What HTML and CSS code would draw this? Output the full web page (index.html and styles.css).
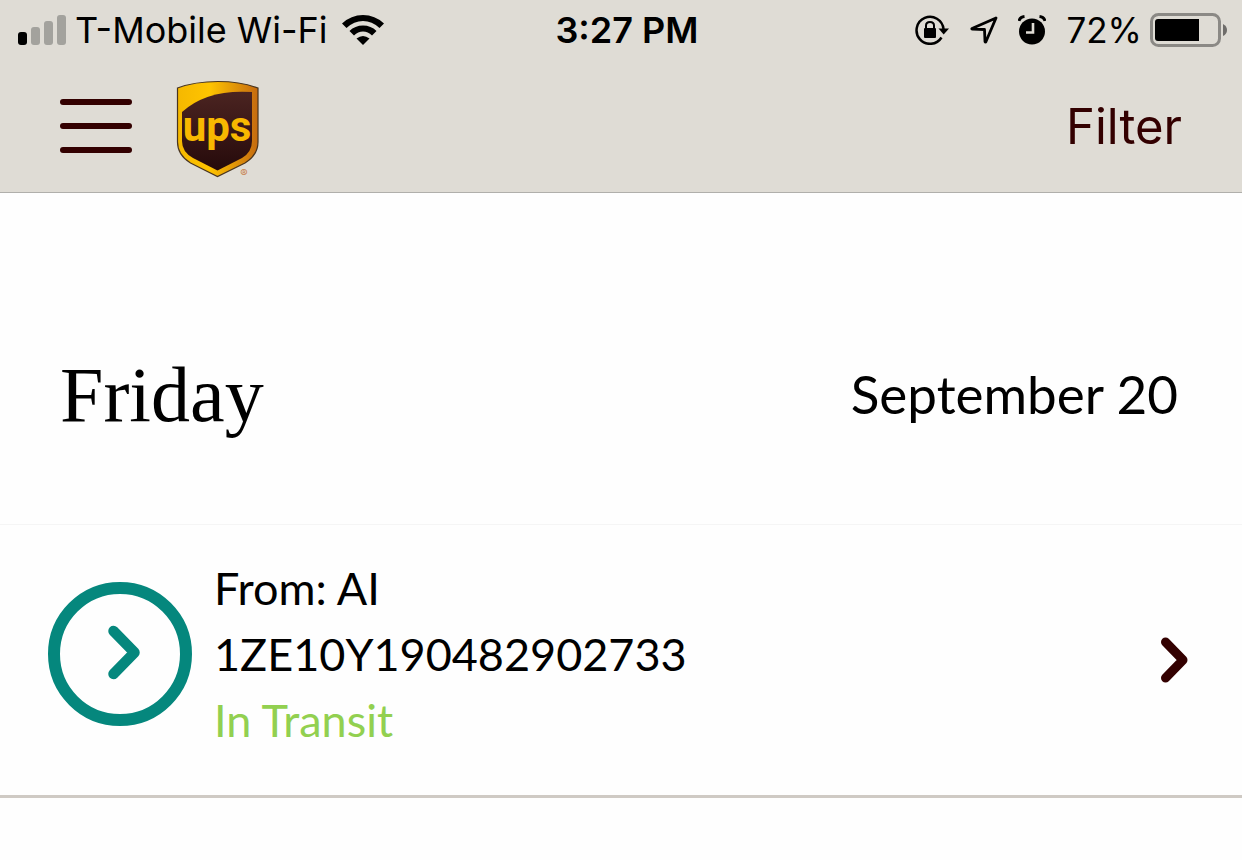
FILE: index.html
```html
<!DOCTYPE html>
<html lang="en">
<head>
  <meta charset="UTF-8">
  <meta name="viewport" content="width=device-width, initial-scale=1">
  <title>UPS</title>
  <link rel="stylesheet" href="styles.css">
</head>
<body>
  <header class="top">
    <div class="status">
      <div class="status-left">
        <svg class="signal" width="48" height="30" viewBox="0 0 48 30">
          <rect x="0" y="17" width="9" height="13" rx="3" fill="#000"/>
          <rect x="13" y="12" width="9" height="18" rx="3" fill="#a3a29d"/>
          <rect x="26" y="6" width="9" height="24" rx="3" fill="#a3a29d"/>
          <rect x="39" y="0" width="9" height="30" rx="3" fill="#a3a29d"/>
        </svg>
        <span class="carrier">T-Mobile Wi-Fi</span>
        <svg width="42" height="30" viewBox="0 0 42 30">
          <path d="M0 8.500Q9 0 21 0T42 8.500L37.500 13Q30 6 21 6T4.500 13Z"/>
          <path d="M7.500 16Q13 10.500 21 10.500T34.500 16L30 20.500Q26 16.500 21 16.500T12 20.500Z"/>
          <path d="M14.500 23.500Q21 18.500 27.500 23.500L21 30Z"/>
        </svg>
      </div>
      <div class="clock">3:27 PM</div>
      <div class="status-right">
        <svg width="35" height="30" viewBox="0 0 35 30">
          <path d="M26.500 22.500A13.500 13.500 0 1 1 28.500 14" fill="none" stroke="#000" stroke-width="2.500"/>
          <path d="M23.500 13.500H34L28.700 19.500Z"/>
          <rect x="9" y="13" width="12" height="10" rx="1"/>
          <path d="M11 14V10.500Q11 7 15 7T19 10.500V14" fill="none" stroke="#000" stroke-width="2"/>
        </svg>
        <svg width="28" height="28" viewBox="0 0 28 28">
          <path d="M26 2L2 12.500Q1.500 13 2.500 13.200L14.500 13.500L15 25.500Q15.500 26.500 16 25.500Z" fill="none" stroke="#000" stroke-width="2.800" stroke-linejoin="round"/>
        </svg>
        <svg width="28" height="30" viewBox="0 0 28 30">
          <circle cx="14" cy="16.500" r="13"/>
          <path d="M1 6Q2 2 6.500 1.500M27 6Q26 2 21.500 1.500" fill="none" stroke="#000" stroke-width="3"/>
          <path d="M15 8V17.500H8" fill="none" stroke="#dfdcd5" stroke-width="2.600"/>
        </svg>
        <span>72%</span>
        <svg class="battery" width="78" height="34" viewBox="0 0 78 34">
          <rect x="1.500" y="1.500" width="68" height="31" rx="7" fill="none" stroke="#8b8985" stroke-width="3"/>
          <path d="M8 6H49V28H8Q5 28 5 25V9Q5 6 8 6Z"/>
          <path d="M73 11Q77 13 77 17T73 23Z" fill="#6f6d6a"/>
        </svg>
      </div>
    </div>
    <nav class="nav">
      <button class="menu" type="button" aria-label="Menu">
        <span></span><span></span><span></span>
      </button>
      <svg class="logo" width="84" height="112" viewBox="0 -10 84 112" role="img" aria-label="UPS">
        <defs>
          <linearGradient id="gold" x1="0" y1="0" x2="1" y2="0">
            <stop offset="0" stop-color="#f5b800"/>
            <stop offset=".4" stop-color="#ffc400"/>
            <stop offset="1" stop-color="#c56a10"/>
          </linearGradient>
          <linearGradient id="brown" x1="0" y1="0" x2="0" y2="1">
            <stop offset="0" stop-color="#4b2421"/>
            <stop offset="1" stop-color="#260a0b"/>
          </linearGradient>
        </defs>
        <path d="M1.500 8Q19 1.500 42 1.500T82 8V62Q82 75 69 83L41.500 96.500L14.500 83Q1.500 75 1.500 62Z" fill="url(#gold)" stroke="#493520" stroke-width="1.200"/>
        <path d="M6 32Q31 9 76 12V61Q76 72 66 78L41.500 90.500L17 78Q6 72 6 61Z" fill="url(#brown)"/>
        <text class="logo-text" x="41" y="61" text-anchor="middle">ups</text>
        <text class="logo-mark" x="68" y="97" text-anchor="middle">®</text>
      </svg>
      <button class="filter" type="button">Filter</button>
    </nav>
  </header>

  <main>
    <section class="day">
      <h1>Friday</h1>
      <span class="date">September 20</span>
    </section>

    <a class="package" href="#">
      <svg width="144" height="144" viewBox="0 0 144 144">
        <circle cx="72" cy="72" r="66" fill="none" stroke="#05877d" stroke-width="12"/>
        <path d="M65.500 49L86.500 70.500L65.500 92" fill="none" stroke="#05877d" stroke-width="10.500" stroke-linecap="round" stroke-linejoin="round"/>
      </svg>
      <div class="details">
        <div>From: AI</div>
        <div>1ZE10Y190482902733</div>
        <div class="transit">In Transit</div>
      </div>
      <svg width="28" height="58" viewBox="0 0 28 58">
        <path d="M5.500 17L23 35L5.500 53" fill="none" stroke="#330000" stroke-width="9" stroke-linecap="round" stroke-linejoin="round"/>
      </svg>
    </a>
  </main>
</body>
</html>
```
FILE: styles.css
```css
body {
  margin: 0;
  background: #fefefe;
  color: #000;
  font-family: Lato, "Open Sans", sans-serif;
}
svg {
  display: block;
  flex-shrink: 0;
}
button {
  padding: 0;
  border: 0;
  background: none;
  color: #330000;
}
.top {
  background: #dfdcd5;
  border-bottom: 1px solid #b0afab;
  font-family: Inter, sans-serif;
}
.status {
  display: grid;
  grid-template-columns: 1fr auto 1fr;
  align-items: center;
  height: 60px;
  padding: 0 14px 0 18px;
  font-size: 36px;
  line-height: 60px;
}
.status-left,
.status-right {
  display: flex;
  align-items: center;
}
.status-left {
  gap: 14px;
}
.carrier {
  margin-left: -5px;
}
.clock {
  padding-left: 8px;
  font-weight: 600;
}
.status-right {
  justify-content: flex-end;
  gap: 20px;
  font-size: 35px;
}
.battery {
  margin-left: -12px;
}
.nav {
  display: flex;
  align-items: center;
  gap: 44px;
  height: 132px;
  padding: 0 60px;
}
.menu {
  display: flex;
  flex-direction: column;
  gap: 18px;
  width: 72px;
}
.menu span {
  height: 6px;
  border-radius: 3px;
  background: #330000;
}
.logo-text {
  font: bold 42px Roboto, sans-serif;
  fill: #f8b800;
}
.logo-mark {
  font-size: 11px;
  fill: #c8824e;
}
.filter {
  margin-left: auto;
  font-family: Inter, sans-serif;
  font-size: 49px;
}
.day {
  display: flex;
  align-items: center;
  justify-content: space-between;
  height: 332px;
  padding: 0 64px 0 60px;
  border-bottom: 1px solid #f5f5f5;
  box-sizing: border-box;
}
h1 {
  margin: 0;
  padding-top: 72px;
  font: 78px/88px "Liberation Serif", serif;
}
.date {
  padding-top: 70px;
  font-size: 53px;
}
.package {
  display: flex;
  align-items: center;
  gap: 22px;
  padding: 30px 54px 42px 48px;
  border-bottom: 3px solid #cfcac4;
  color: #000;
  font-size: 45px;
  line-height: 66px;
  text-decoration: none;
}
.details {
  flex: 1;
}
.transit {
  color: #92d050;
}
```
